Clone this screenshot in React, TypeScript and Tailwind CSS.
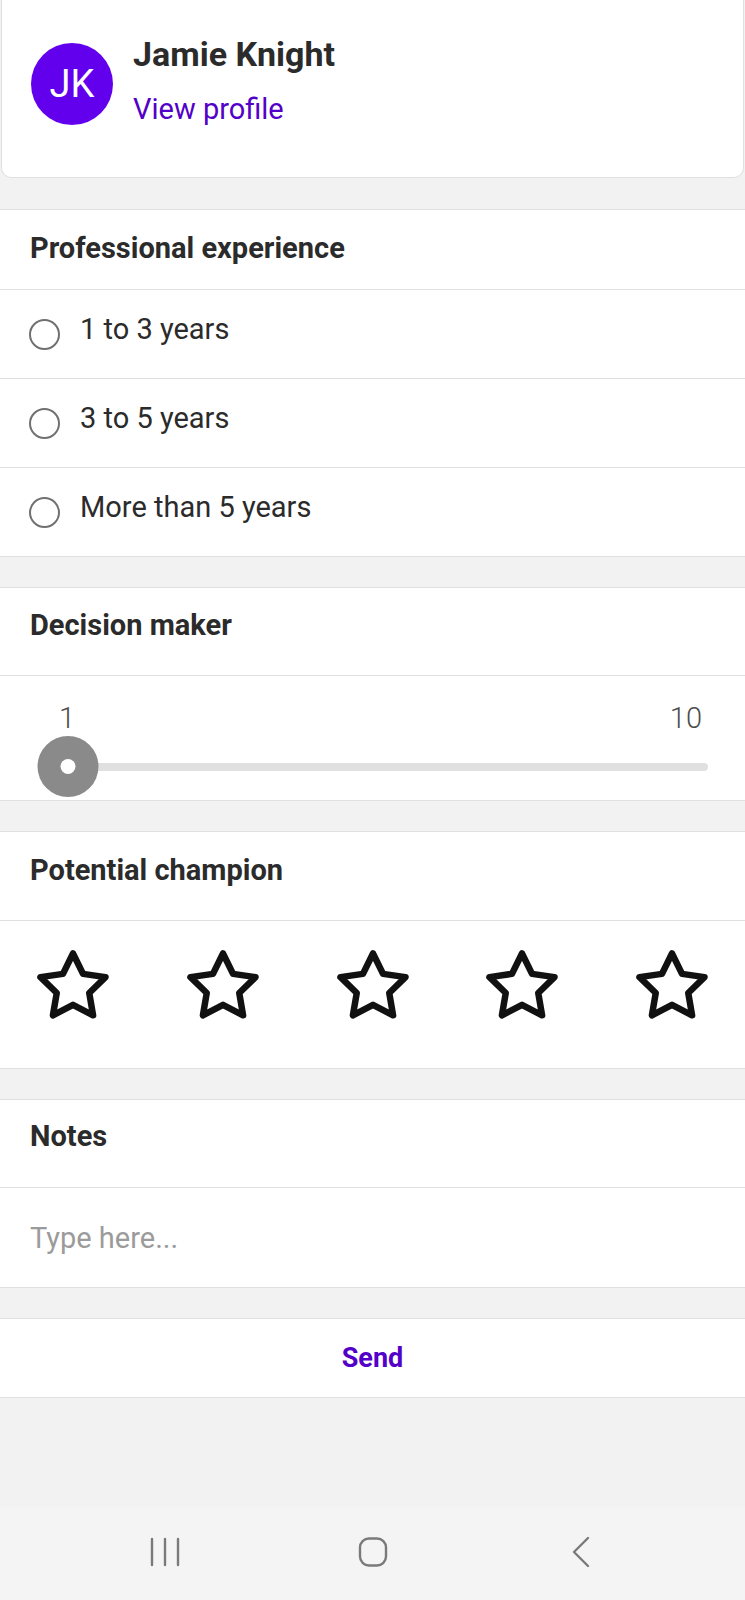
import React, { useState } from 'react';

const font = { fontFamily: 'Roboto, "Noto Sans", Arial, sans-serif' };

interface SectionProps {
  title: string;
  headerClass: string;
  children: React.ReactNode;
}

const Section: React.FC<SectionProps> = ({ title, headerClass, children }) => (
  <section className="bg-white border-t border-[#e0e0e0]">
    <div className={`flex items-start px-[30px] border-b border-[#e0e0e0] ${headerClass}`}>
      <h2 className="text-[29px] leading-[34px] font-bold text-[#2b2b2b]">{title}</h2>
    </div>
    {children}
  </section>
);

const StarIcon = () => (
  <svg viewBox="0 0 24 24" className="w-[78px] h-[78px]" fill="none" stroke="#111" strokeWidth="2" strokeLinejoin="round">
    <polygon points="12,2 15.09,8.26 22,9.27 17,14.14 18.18,21.02 12,17.77 5.82,21.02 7,14.14 2,9.27 8.91,8.26" />
  </svg>
);

const options = ['1 to 3 years', '3 to 5 years', 'More than 5 years'];

export default function App() {
  const [selected, setSelected] = useState<number | null>(null);
  const [rating, setRating] = useState(0);

  return (
    <div className="min-h-[1600px] bg-[#f2f2f2] flex flex-col" style={font}>
      {/* profile card */}
      <div className="mx-[1px] h-[178px] bg-white border-x border-b border-[#e0e0e0] rounded-b-[10px] flex items-start pt-[36px] pl-[29px] gap-[20px]">
        <div className="mt-[7px] w-[82px] h-[82px] rounded-full bg-[#6200ee] flex items-center justify-center text-white text-[38px] leading-none">
          JK
        </div>
        <div className="flex flex-col">
          <h1 className="text-[34px] leading-[36px] font-bold text-[#2b2b2b]">Jamie Knight</h1>
          <a className="mt-[19px] text-[29px] leading-[36px] text-[#5300c8]">View profile</a>
        </div>
      </div>

      <div className="h-[31px]" />

      <Section title="Professional experience" headerClass="h-[80px] pt-[21px]">
        {options.map((opt, i) => (
          <div
            key={opt}
            onClick={() => setSelected(i)}
            className="h-[89px] flex items-center pl-[29px] gap-[20px] border-b border-[#e0e0e0]"
          >
            <span className="w-[31px] h-[31px] rounded-full border-2 border-[#707070] flex items-center justify-center">
              {selected === i && <span className="w-[15px] h-[15px] rounded-full bg-[#6200ee]" />}
            </span>
            <span className="mb-[10px] text-[29px] leading-[34px] text-[#2b2b2b]">{opt}</span>
          </div>
        ))}
      </Section>

      <div className="h-[30px]" />

      <Section title="Decision maker" headerClass="h-[88px] pt-[20px]">
        <div className="h-[125px] border-b border-[#e0e0e0] pt-[26px]">
          <div className="flex justify-between pl-[59px] pr-[43px] text-[29px] leading-[32px] text-[#4d4d4d] font-light">
            <span>1</span>
            <span>10</span>
          </div>
          <div className="ml-[68px] mr-[37px] h-[61px] mt-[2px] flex items-center relative">
            <div className="w-full h-[8px] rounded-full bg-[#e0e0e0]" />
            <div className="absolute left-0 top-0 -translate-x-1/2 w-[61px] h-[61px] rounded-full bg-[#8a8a8a] flex items-center justify-center">
              <div className="w-[15px] h-[15px] rounded-full bg-white" />
            </div>
          </div>
        </div>
      </Section>

      <div className="h-[30px]" />

      <Section title="Potential champion" headerClass="h-[89px] pt-[21px]">
        <div className="h-[148px] border-b border-[#e0e0e0] pt-[26px] flex items-start justify-between px-[34px]">
          {[1, 2, 3, 4, 5].map((n) => (
            <button key={n} onClick={() => setRating(n)} aria-label={`${n} stars`} data-active={rating >= n}>
              <StarIcon />
            </button>
          ))}
        </div>
      </Section>

      <div className="h-[30px]" />

      <Section title="Notes" headerClass="h-[88px] pt-[19px]">
        <div className="h-[100px] border-b border-[#e0e0e0] flex items-center px-[30px]">
          <input
            placeholder="Type here..."
            className="w-full text-[29px] leading-[34px] text-[#2b2b2b] placeholder:text-[#9b9b9b] outline-none bg-transparent"
          />
        </div>
      </Section>

      <div className="h-[30px]" />

      <button className="h-[80px] bg-white border-y border-[#e0e0e0] flex items-center justify-center text-[27px] font-bold text-[#5300c8]">
        Send
      </button>

      <div className="flex-1" />

      {/* system nav bar */}
      <div className="h-[93px] bg-[#f4f4f4] flex items-center justify-center gap-[148px] pb-[4px]">
        <div className="w-[60px] flex justify-center">
          <svg width="30" height="30" viewBox="0 0 30 30" fill="none" stroke="#7a7a7a" strokeWidth="2.4" strokeLinecap="round">
            <line x1="2" y1="2" x2="2" y2="28" />
            <line x1="15" y1="2" x2="15" y2="28" />
            <line x1="28" y1="2" x2="28" y2="28" />
          </svg>
        </div>
        <div className="w-[60px] flex justify-center">
          <svg width="30" height="30" viewBox="0 0 30 30" fill="none" stroke="#7a7a7a" strokeWidth="2.4">
            <rect x="2" y="1.5" width="26" height="27" rx="9" />
          </svg>
        </div>
        <div className="w-[60px] flex justify-center">
          <svg width="20" height="32" viewBox="0 0 20 32" fill="none" stroke="#7a7a7a" strokeWidth="2.4" strokeLinecap="round" strokeLinejoin="round">
            <polyline points="17,2 3,16 17,30" />
          </svg>
        </div>
      </div>
    </div>
  );
}
